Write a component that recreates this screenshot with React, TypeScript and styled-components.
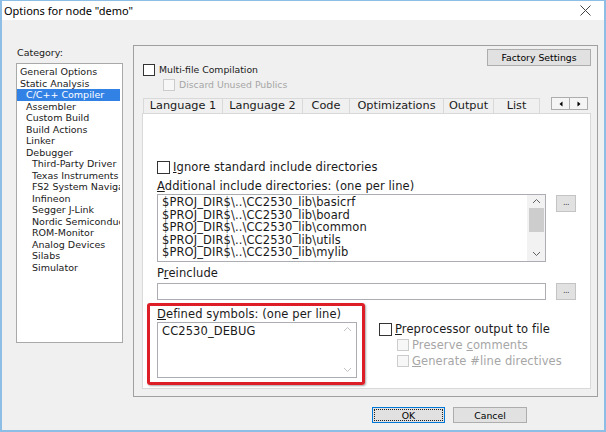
import React from "react";
import styled, { createGlobalStyle } from "styled-components";

const GlobalStyle = createGlobalStyle`
  html, body {
    margin: 0;
    padding: 0;
    background: #ffffff;
  }

  * {
    box-sizing: border-box;
  }
`;

const FONT = {
  UI: `"DejaVu Sans", Verdana, sans-serif`,
  TITLE: `"Noto Sans", "Segoe UI", sans-serif`,
  SMALL: 9.3,
  BODY: 11.5,
  TAB: 11.3,
};

const COLOR = {
  FACE: "#f0f0f0",
  FRAME: "#8dbfe6",
  BUTTON: "#e1e1e1",
  BUTTON_BORDER: "#adadad",
  FIELD_BORDER: "#abadb3",
  TAB_BORDER: "#d9d9d9",
  DISABLED: "#a6a6a6",
  SELECTED: "#3282e6",
  RED: "#dd1e27",
  TEXT: "#1a1a1a",
};

const CATEGORIES: { label: string; level: number; selected?: boolean }[] = [
  { label: "General Options", level: 0 },
  { label: "Static Analysis", level: 0 },
  { label: "C/C++ Compiler", level: 1, selected: true },
  { label: "Assembler", level: 1 },
  { label: "Custom Build", level: 1 },
  { label: "Build Actions", level: 1 },
  { label: "Linker", level: 1 },
  { label: "Debugger", level: 1 },
  { label: "Third-Party Driver", level: 2 },
  { label: "Texas Instruments", level: 2 },
  { label: "FS2 System Navigator", level: 2 },
  { label: "Infineon", level: 2 },
  { label: "Segger J-Link", level: 2 },
  { label: "Nordic Semiconductor", level: 2 },
  { label: "ROM-Monitor", level: 2 },
  { label: "Analog Devices", level: 2 },
  { label: "Silabs", level: 2 },
  { label: "Simulator", level: 2 },
];

const TABS = [
  { label: "Language 1", width: 80 },
  { label: "Language 2", width: 81 },
  { label: "Code", width: 48 },
  { label: "Optimizations", width: 95 },
  { label: "Output", width: 51 },
  { label: "List", width: 47 },
];

const INCLUDES = [
  "$PROJ_DIR$\\..\\CC2530_lib\\basicrf",
  "$PROJ_DIR$\\..\\CC2530_lib\\board",
  "$PROJ_DIR$\\..\\CC2530_lib\\common",
  "$PROJ_DIR$\\..\\CC2530_lib\\utils",
  "$PROJ_DIR$\\..\\CC2530_lib\\mylib",
];

const Window = styled.div`
  width: 606px;
  height: 432px;
  display: flex;
  flex-direction: column;
  background: ${COLOR.FACE};
  border: 2px solid ${COLOR.FRAME};
  border-top-width: 1px;
  font-family: ${FONT.UI};
  color: ${COLOR.TEXT};
  overflow: hidden;
`;

const TitleBar = styled.div`
  height: 19px;
  flex-shrink: 0;
  display: flex;
  align-items: center;
  justify-content: space-between;
  padding: 0 13px 0 2px;
  background: #ffffff;
`;

const TitleText = styled.span`
  font-family: ${FONT.TITLE};
  font-size: 11px;
  color: #000000;
`;

const Main = styled.div`
  display: flex;
  gap: 10px;
  padding: 25px 6px 0 14px;
`;

const CategoryColumn = styled.div`
  width: 107px;
  display: flex;
  flex-direction: column;
`;

const CategoryLabel = styled.div`
  margin: 2px 0 4px 1px;
  font-size: 9.5px;
  line-height: 12px;
`;

const CategoryList = styled.div`
  height: 280px;
  padding-top: 2px;
  background: #ffffff;
  border: 1px solid #a9a9a9;
  overflow: hidden;
`;

const CategoryItem = styled.div<{ $level: number; $selected?: boolean }>`
  height: 11.5px;
  line-height: 11.5px;
  margin-right: 2px;
  padding-left: ${(p) => 3 + p.$level * 6}px;
  font-size: 9.5px;
  white-space: nowrap;
  overflow: hidden;
  background: ${(p) => (p.$selected ? COLOR.SELECTED : "transparent")};
  color: ${(p) => (p.$selected ? "#ffffff" : COLOR.TEXT)};
`;

const Panel = styled.div`
  width: 465px;
  height: 352px;
  display: flex;
  flex-direction: column;
  padding: 3px 6px 7px 8px;
  border: 1px solid #a0a0a0;
`;

const Header = styled.div`
  display: flex;
  justify-content: space-between;
  align-items: flex-start;
`;

const CheckGroup = styled.div`
  display: flex;
  flex-direction: column;
  gap: 2px;
  padding: 14px 0 0 1px;
`;

const CheckRow = styled.div<{ $indent?: number; $disabled?: boolean; $large?: boolean }>`
  display: flex;
  align-items: center;
  gap: ${(p) => (p.$large ? 3 : 4)}px;
  height: ${(p) => (p.$large ? 14 : 13)}px;
  padding-left: ${(p) => p.$indent ?? 0}px;
  font-size: ${(p) => (p.$large ? FONT.BODY : FONT.SMALL)}px;
  letter-spacing: ${(p) => (p.$large ? 0.1 : 0)}px;
  color: ${(p) => (p.$disabled ? COLOR.DISABLED : COLOR.TEXT)};
  white-space: nowrap;
`;

const Box = styled.span<{ $disabled?: boolean; $size: number }>`
  width: ${(p) => p.$size}px;
  height: ${(p) => p.$size}px;
  flex-shrink: 0;
  background: ${(p) => (p.$disabled ? "#f7f7f7" : "#ffffff")};
  border: 1px solid ${(p) => (p.$disabled ? "#cccccc" : "#333333")};
`;

const Key = styled.span`
  text-decoration: underline;
`;

const PushButton = styled.div<{ $width: number; $height: number; $focused?: boolean }>`
  width: ${(p) => p.$width}px;
  height: ${(p) => p.$height}px;
  display: flex;
  align-items: center;
  justify-content: center;
  background: ${COLOR.BUTTON};
  border: 1px solid ${(p) => (p.$focused ? "#0078d7" : COLOR.BUTTON_BORDER)};
  outline: ${(p) => (p.$focused ? "1px dotted #222" : "none")};
  outline-offset: -3px;
  font-size: ${FONT.SMALL}px;
  color: #000000;
  white-space: nowrap;
`;

const TabStrip = styled.div`
  display: flex;
  height: 15px;
  margin-top: 7px;
  padding-left: 1px;
`;

const Tab = styled.div<{ $width: number }>`
  width: ${(p) => p.$width}px;
  height: 15px;
  margin-right: -1px;
  background: ${COLOR.FACE};
  border: 1px solid ${COLOR.TAB_BORDER};
  border-bottom: none;
  font-size: ${FONT.TAB}px;
  line-height: 14px;
  text-align: center;
  white-space: nowrap;
`;

const TabScroller = styled.div`
  display: flex;
  margin: -1px 3px 0 auto;
`;

const ArrowButton = styled.div`
  width: 19px;
  height: 13px;
  margin-left: -1px;
  display: flex;
  align-items: center;
  justify-content: center;
  background: #f5f5f5;
  border: 1px solid ${COLOR.BUTTON_BORDER};
`;

const TabPanel = styled.div`
  flex: 1;
  display: flex;
  flex-direction: column;
  padding: 46px 0 0 14px;
  background: #ffffff;
  border: 1px solid ${COLOR.TAB_BORDER};
`;

const FieldLabel = styled.div<{ $gap: number }>`
  margin-top: ${(p) => p.$gap}px;
  font-size: ${FONT.BODY}px;
  letter-spacing: 0.1px;
  line-height: 12px;
  white-space: nowrap;
`;

const FieldRow = styled.div<{ $gap: number }>`
  display: flex;
  align-items: flex-start;
  gap: 10px;
  margin-top: ${(p) => p.$gap}px;
`;

const ListBox = styled.div`
  width: 389px;
  height: 68px;
  display: flex;
  background: #ffffff;
  border: 1px solid ${COLOR.FIELD_BORDER};
`;

const ListLines = styled.div`
  flex: 1;
  padding: 1px 0 0 4px;
  font-size: ${FONT.BODY}px;
  letter-spacing: 0.1px;
  line-height: 12.6px;
  white-space: nowrap;
`;

const ScrollBar = styled.div<{ $disabled?: boolean }>`
  width: 18px;
  display: flex;
  flex-direction: column;
  align-items: center;
  justify-content: space-between;
  padding: 3px 0 4px;
  background: ${(p) => (p.$disabled ? "#ffffff" : "#f2f2f2")};
`;

const Thumb = styled.div`
  width: 15px;
  flex: 1;
  margin: 4px 0 19px;
  background: #cdcdcd;
`;

const TextInput = styled.div`
  width: 389px;
  height: 17px;
  background: #ffffff;
  border: 1px solid ${COLOR.FIELD_BORDER};
`;

const BrowseButton = styled.div<{ $offset: number }>`
  width: 20px;
  height: 17px;
  margin-top: ${(p) => p.$offset}px;
  display: flex;
  align-items: center;
  justify-content: center;
  padding-bottom: 3px;
  background: ${COLOR.BUTTON};
  border: 1px solid #c4c4c4;
  font-size: 8px;
  letter-spacing: -0.5px;
  color: #444444;
`;

const BottomRow = styled.div`
  display: flex;
  align-items: flex-start;
  margin-top: 3px;
`;

const Highlight = styled.div`
  margin-left: -10px;
  padding: 2px 5px 4px 7px;
  border: 3px solid ${COLOR.RED};
  border-radius: 3px;
  box-shadow: 1px 1px 2px rgba(0, 0, 0, 0.35);
`;

const SymbolBox = styled.div`
  width: 200px;
  height: 56px;
  margin-top: 2px;
  display: flex;
  background: #ffffff;
  border: 1px solid ${COLOR.FIELD_BORDER};
`;

const OutputOptions = styled.div`
  display: flex;
  flex-direction: column;
  gap: 2px;
  margin-left: 14px;
  padding-top: 19px;
`;

const Footer = styled.div`
  display: flex;
  justify-content: flex-end;
  gap: 8px;
  padding: 10px 77px 0 0;
`;

const Chevron = ({ up, color }: { up?: boolean; color: string }) => (
  <svg width="9" height="6" viewBox="0 0 9 6">
    <path
      d={up ? "M1 5 L4.5 1.5 L8 5" : "M1 1 L4.5 4.5 L8 1"}
      fill="none"
      stroke={color}
      strokeWidth="1"
    />
  </svg>
);

const Triangle = ({ left }: { left?: boolean }) => (
  <svg width="4" height="6" viewBox="0 0 4 6">
    <path d={left ? "M3.5 0.5 L0.5 3 L3.5 5.5 Z" : "M0.5 0.5 L3.5 3 L0.5 5.5 Z"} fill="#000" />
  </svg>
);

const CloseIcon = () => (
  <svg width="11" height="11" viewBox="0 0 11 11">
    <path d="M0.5 0.5 L10.5 10.5 M10.5 0.5 L0.5 10.5" stroke="#444" strokeWidth="1" />
  </svg>
);

export const App = (): JSX.Element => {
  return (
    <>
      <GlobalStyle />
      <Window>
        <TitleBar>
          <TitleText>Options for node "demo"</TitleText>
          <CloseIcon />
        </TitleBar>

        <Main>
          <CategoryColumn>
            <CategoryLabel>Category:</CategoryLabel>
            <CategoryList>
              {CATEGORIES.map((c) => (
                <CategoryItem key={c.label} $level={c.level} $selected={c.selected}>
                  {c.label}
                </CategoryItem>
              ))}
            </CategoryList>
          </CategoryColumn>

          <Panel>
            <Header>
              <CheckGroup>
                <CheckRow>
                  <Box $size={12} />
                  Multi-file Compilation
                </CheckRow>
                <CheckRow $indent={20} $disabled>
                  <Box $size={12} $disabled />
                  Discard Unused Publics
                </CheckRow>
              </CheckGroup>
              <PushButton $width={104} $height={17}>
                Factory Settings
              </PushButton>
            </Header>

            <TabStrip>
              {TABS.map((t) => (
                <Tab key={t.label} $width={t.width}>
                  {t.label}
                </Tab>
              ))}
              <TabScroller>
                <ArrowButton>
                  <Triangle left />
                </ArrowButton>
                <ArrowButton>
                  <Triangle />
                </ArrowButton>
              </TabScroller>
            </TabStrip>

            <TabPanel>
              <CheckRow $large>
                <Box $size={13} />
                <span>
                  <Key>I</Key>gnore standard include directories
                </span>
              </CheckRow>

              <FieldLabel $gap={6}>
                <Key>A</Key>dditional include directories: (one per line)
              </FieldLabel>
              <FieldRow $gap={2}>
                <ListBox>
                  <ListLines>
                    {INCLUDES.map((line) => (
                      <div key={line}>{line}</div>
                    ))}
                  </ListLines>
                  <ScrollBar>
                    <Chevron up color="#606060" />
                    <Thumb />
                    <Chevron color="#606060" />
                  </ScrollBar>
                </ListBox>
                <BrowseButton $offset={1}>...</BrowseButton>
              </FieldRow>

              <FieldLabel $gap={5}>
                P<Key>r</Key>einclude
              </FieldLabel>
              <FieldRow $gap={4}>
                <TextInput />
                <BrowseButton $offset={0}>...</BrowseButton>
              </FieldRow>

              <BottomRow>
                <Highlight>
                  <FieldLabel $gap={0}>
                    <Key>D</Key>efined symbols: (one per line)
                  </FieldLabel>
                  <SymbolBox>
                    <ListLines style={{ paddingTop: 2 }}>CC2530_DEBUG</ListLines>
                    <ScrollBar $disabled>
                      <Chevron up color="#c2c2c2" />
                      <Chevron color="#c2c2c2" />
                    </ScrollBar>
                  </SymbolBox>
                </Highlight>

                <OutputOptions>
                  <CheckRow $large>
                    <Box $size={13} />
                    <span>
                      <Key>P</Key>reprocessor output to file
                    </span>
                  </CheckRow>
                  <CheckRow $large $indent={18} $disabled>
                    <Box $size={12} $disabled />
                    <span>
                      Preserve <Key>c</Key>omments
                    </span>
                  </CheckRow>
                  <CheckRow $large $indent={18} $disabled>
                    <Box $size={12} $disabled />
                    <span>
                      <Key>G</Key>enerate #line directives
                    </span>
                  </CheckRow>
                </OutputOptions>
              </BottomRow>
            </TabPanel>
          </Panel>
        </Main>

        <Footer>
          <PushButton $width={73} $height={16} $focused>
            OK
          </PushButton>
          <PushButton $width={74} $height={16}>
            Cancel
          </PushButton>
        </Footer>
      </Window>
    </>
  );
};

export default App;
